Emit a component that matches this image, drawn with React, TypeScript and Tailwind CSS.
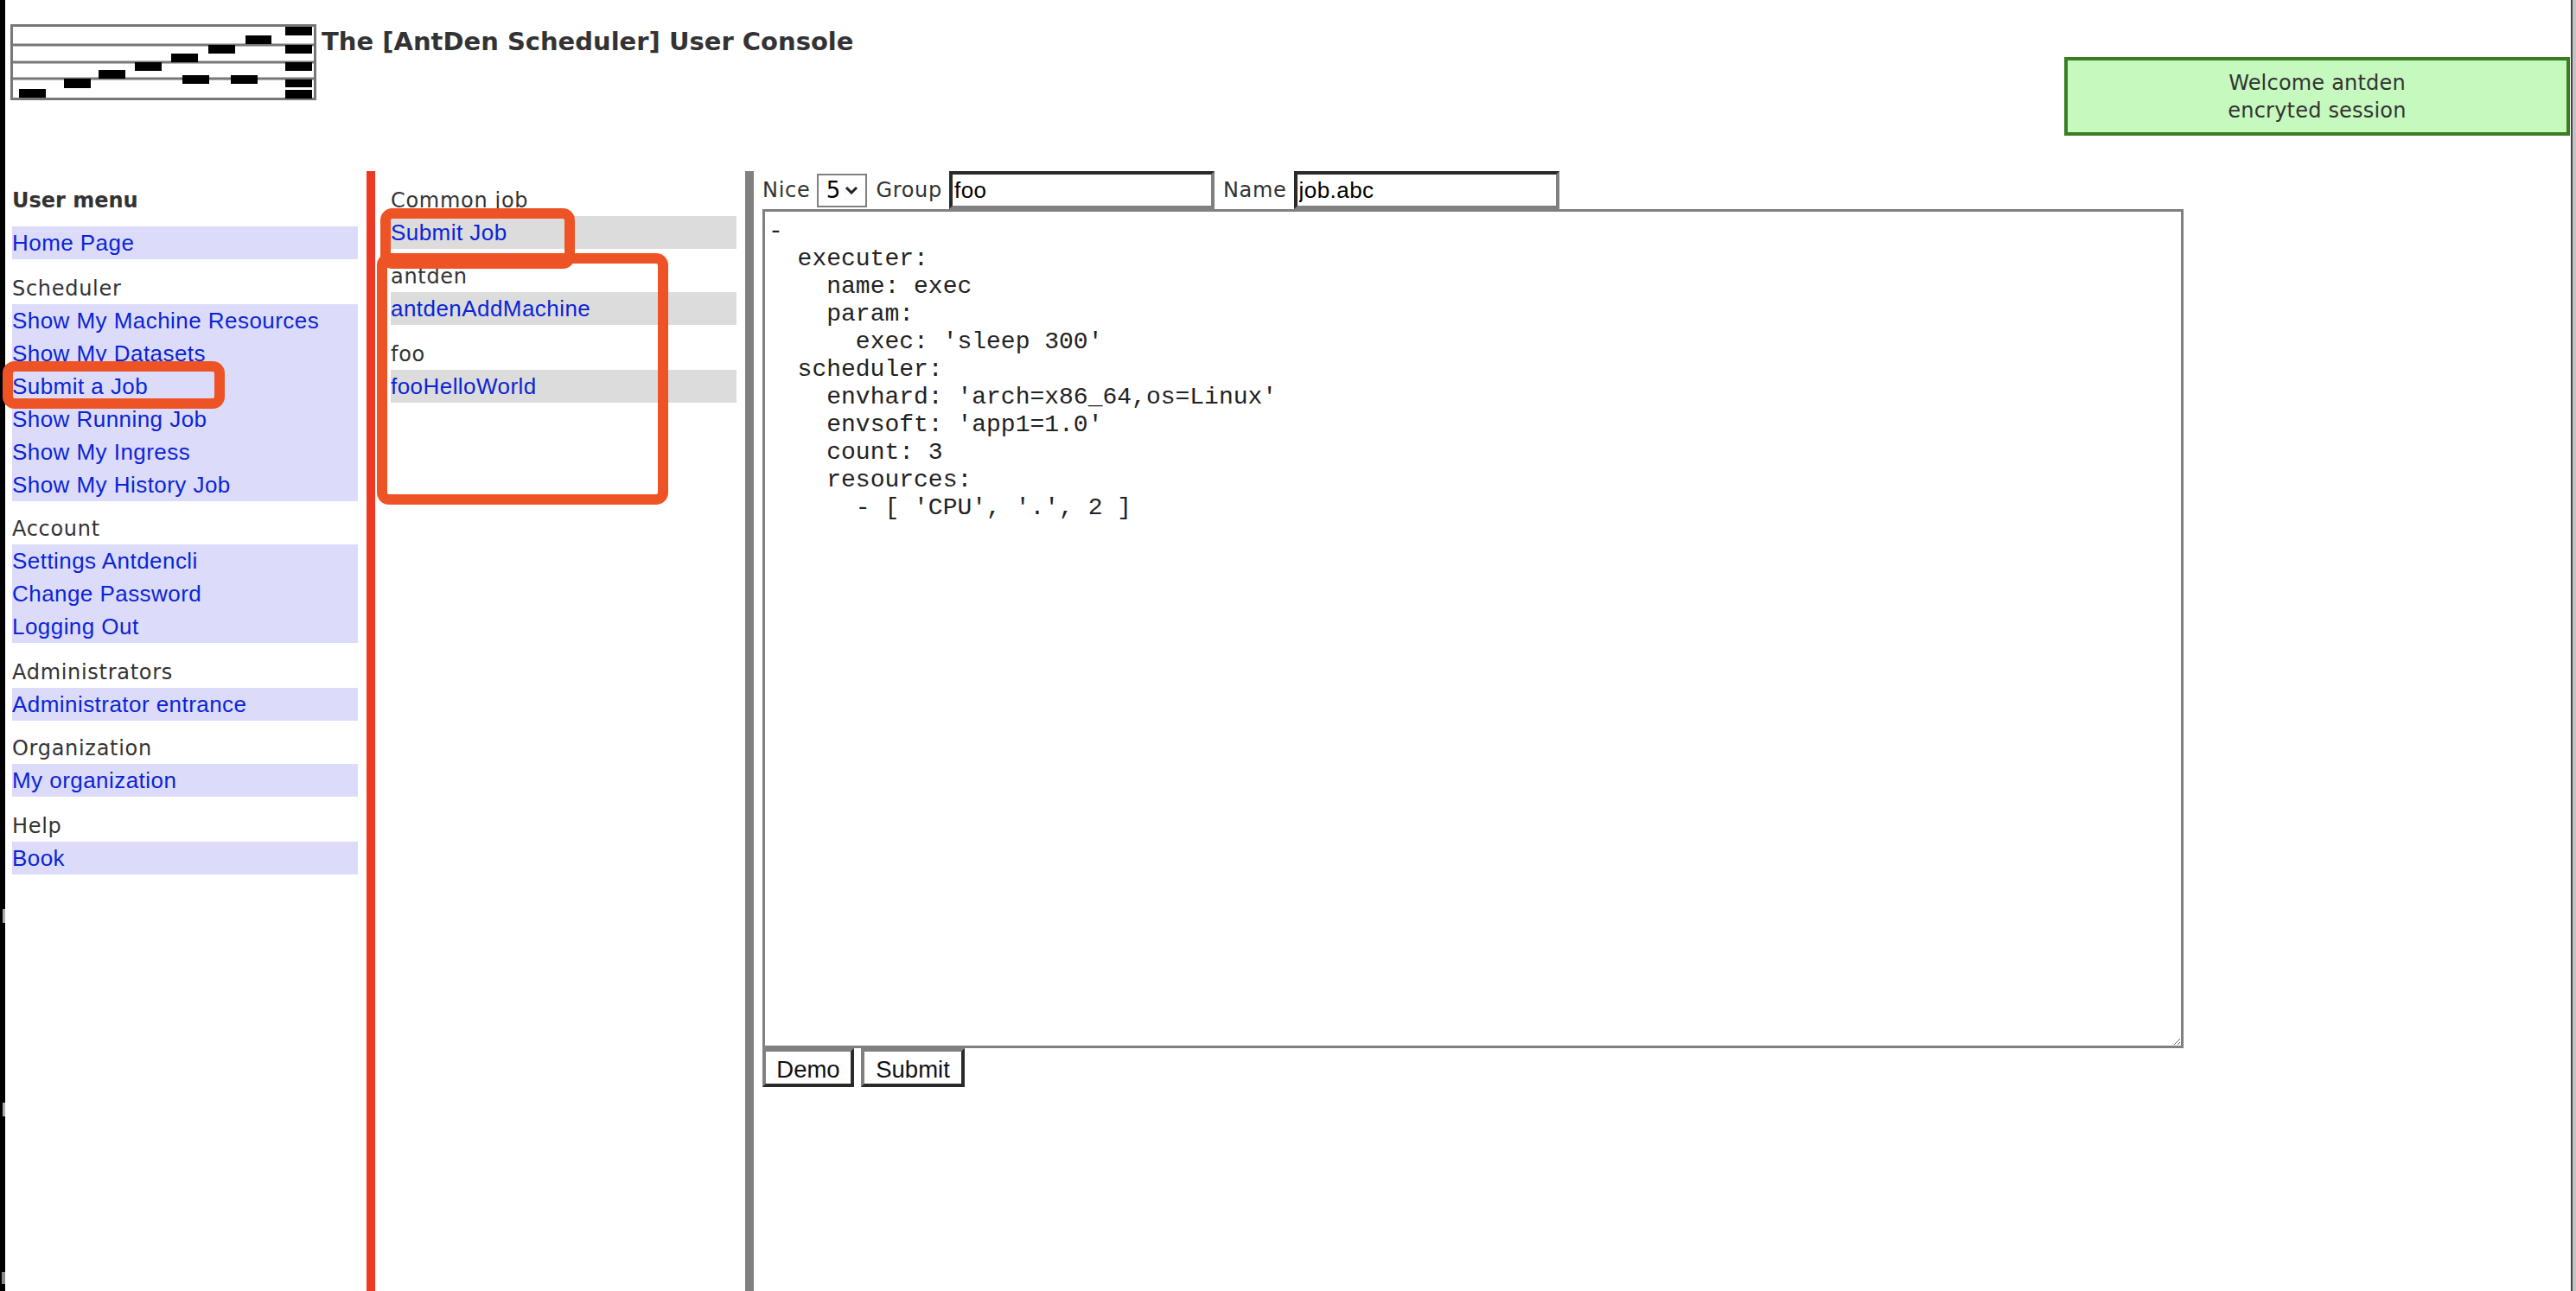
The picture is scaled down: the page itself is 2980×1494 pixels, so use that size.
import React from 'react';

const labelFont = "font-['DejaVu_Sans',sans-serif]";
const linkFont = "font-['Liberation_Sans',Arial,sans-serif]";

const yaml = `-
  executer:
    name: exec
    param:
      exec: 'sleep 300'
  scheduler:
    envhard: 'arch=x86_64,os=Linux'
    envsoft: 'app1=1.0'
    count: 3
    resources:
      - [ 'CPU', '.', 2 ]`;

const menu = [
    { title: 'User menu', links: ['Home Page'], bold: true, mb: 'mb-[16px]' },
    { title: 'Scheduler', links: ['Show My Machine Resources', 'Show My Datasets', 'Submit a Job', 'Show Running Job', 'Show My Ingress', 'Show My History Job'], mb: 'mb-[14px]' },
    { title: 'Account', links: ['Settings Antdencli', 'Change Password', 'Logging Out'], mb: 'mb-[16px]' },
    { title: 'Administrators', links: ['Administrator entrance'], mb: 'mb-[14px]' },
    { title: 'Organization', links: ['My organization'], mb: 'mb-[16px]' },
    { title: 'Help', links: ['Book'], mb: 'mb-[14px]' },
];

const jobs = [
    { title: 'Common job', links: ['Submit Job'], mb: 'mb-[14px]' },
    { title: 'antden', links: ['antdenAddMachine'], mb: 'mb-[16px]' },
    { title: 'foo', links: ['fooHelloWorld'], mb: 'mb-[14px]' },
];

const Logo = () => (
    <svg width="354" height="88" viewBox="0 0 354 88" className="shrink-0">
        <g fill="none" stroke="#777" strokeWidth="3">
            <rect x="1.5" y="1.5" width="351" height="85" />
            <path d="M0 24H354M0 44H354M0 63H354" />
        </g>
        <g fill="#000">
            <rect x="10" y="75" width="31" height="10" />
            <rect x="62" y="63" width="31" height="11" />
            <rect x="102" y="53" width="31" height="10" />
            <rect x="144" y="44" width="31" height="10" />
            <rect x="186" y="34" width="31" height="10" />
            <rect x="229" y="24" width="31" height="10" />
            <rect x="272" y="13" width="30" height="10" />
            <rect x="199" y="59" width="31" height="10" />
            <rect x="255" y="59" width="31" height="10" />
            <rect x="318" y="3" width="31" height="10" />
            <rect x="318" y="24" width="31" height="10" />
            <rect x="318" y="44" width="31" height="10" />
            <rect x="318" y="64" width="31" height="9" />
            <rect x="318" y="76" width="31" height="10" />
        </g>
    </svg>
);

type Group = { title: string; links: string[]; bold?: boolean; mb: string };

const LinkGroup = ({ group, bg }: { group: Group; bg: string }) => (
    <div className={group.mb}>
        <div className={`h-[36px] text-[24px] leading-[36px] text-[#333] ${labelFont} ${group.bold ? 'font-bold mb-[12px]' : 'tracking-[0.7px]'}`}>
            {group.title}
        </div>
        <div className={bg}>
            {group.links.map((l) => (
                <div key={l} className={`h-[38px] text-[26px] leading-[38px] tracking-[0.45px] text-[#0b24d6] ${linkFont}`}>{l}</div>
            ))}
        </div>
    </div>
);

export default function App() {
    return (
        <div className="relative w-[2980px] h-[1494px] overflow-hidden bg-white flex">
            {/* Window edge, with specks of the window behind it */}
            <div className="relative w-[6px] shrink-0 bg-black">
                <div className="absolute left-[3px] top-[1052px] w-[3px] h-[16px] bg-[#aaa]" />
                <div className="absolute left-[3px] top-[1276px] w-[3px] h-[16px] bg-[#aaa]" />
                <div className="absolute left-[2px] top-[1472px] w-[4px] h-[14px] bg-[#888]" />
            </div>

            <div className="flex-1 flex flex-col min-w-0">
                {/* Header */}
                <header className="h-[198px] shrink-0 flex items-start">
                    <div className="ml-[6px] mt-[28px]">
                        <Logo />
                    </div>
                    <h1 className={`ml-[6px] mt-[26px] text-[29px] leading-[44px] font-bold text-[#333] ${labelFont}`}>
                        The [AntDen Scheduler] User Console
                    </h1>
                    <div className={`ml-auto mr-[1px] mt-[66px] w-[585px] h-[91px] bg-[#c6f9be] border-[4px] border-[#3a7d23] text-center text-[24px] leading-[32px] tracking-[0.2px] text-[#333] pt-[10px] ${labelFont}`}>
                        <div>Welcome antden</div>
                        <div>encryted session</div>
                    </div>
                </header>

                <div className="flex-1 flex min-h-0">
                    {/* User menu */}
                    <aside className="w-[428px] shrink-0 border-r-[10px] border-[#ee3a24] pl-[8px] pr-[10px] pt-[16px]">
                        {menu.map((g) => (
                            <LinkGroup key={g.title} group={g} bg="bg-[#dcdcfa]" />
                        ))}
                    </aside>

                    {/* Job list */}
                    <nav className="w-[438px] shrink-0 border-r-[10px] border-[#808080] pl-[18px] pr-[10px] pt-[16px]">
                        {jobs.map((g) => (
                            <LinkGroup key={g.title} group={g} bg="bg-[#dcdcdc]" />
                        ))}
                    </nav>

                    {/* Job form */}
                    <main className="flex-1 pl-[10px]">
                        <div className={`flex items-center h-[44px] text-[24px] tracking-[0.7px] text-[#333] ${labelFont}`}>
                            <span>Nice</span>
                            <span className="ml-[8px] w-[58px] h-[39px] border-2 border-[#808080] flex items-center justify-center gap-[4px] text-[26px] text-black">
                                5
                                <svg width="16" height="10" viewBox="0 0 16 10" fill="none" stroke="#222" strokeWidth="3"><path d="M2 2l6 6 6-6" /></svg>
                            </span>
                            <span className="ml-[10px]">Group</span>
                            <input
                                readOnly
                                value="foo"
                                className={`ml-[8px] w-[307px] h-[44px] pl-[2px] bg-white border-[4px] border-t-[#2a2a2a] border-l-[#2a2a2a] border-b-[#808080] border-r-[#808080] text-[26px] tracking-[0.45px] text-black ${linkFont}`}
                            />
                            <span className="ml-[10px]">Name</span>
                            <input
                                readOnly
                                value="job.abc"
                                className={`ml-[8px] w-[307px] h-[44px] pl-[2px] bg-white border-[4px] border-t-[#2a2a2a] border-l-[#2a2a2a] border-b-[#808080] border-r-[#808080] text-[26px] tracking-[0.45px] text-black ${linkFont}`}
                            />
                        </div>
                        <textarea
                            readOnly
                            value={yaml}
                            className="block w-[1644px] h-[971px] border-[3px] border-[#808080] bg-white px-[4px] pt-[7px] text-[28px] leading-[32px] text-[#222] font-['Liberation_Mono',monospace]"
                        />
                        <div className="flex gap-[8px]">
                            <button className={`w-[106px] h-[45px] bg-white border-[4px] border-t-[#808080] border-l-[#808080] border-b-[#2a2a2a] border-r-[#2a2a2a] text-[27.5px] text-[#111] ${linkFont}`}>Demo</button>
                            <button className={`w-[120px] h-[45px] bg-white border-[4px] border-t-[#808080] border-l-[#808080] border-b-[#2a2a2a] border-r-[#2a2a2a] text-[27.5px] text-[#111] ${linkFont}`}>Submit</button>
                        </div>
                    </main>
                </div>
            </div>

            {/* Window edge on the right */}
            <div className="w-[2px] shrink-0 bg-[#444]" />
            <div className="w-[4px] shrink-0 bg-[#c4c4c4]" />

            {/* Annotation boxes drawn over the screenshot */}
            <div className="absolute left-[3px] top-[418px] w-[257px] h-[55px] border-[12px] border-[#ee5326] rounded-[14px]" />
            <div className="absolute left-[440px] top-[241px] w-[225px] h-[70px] border-[12px] border-[#ee5326] rounded-[14px]" />
            <div className="absolute left-[436px] top-[293px] w-[337px] h-[291px] border-[12px] border-[#ee5326] rounded-[14px]" />
        </div>
    );
}
